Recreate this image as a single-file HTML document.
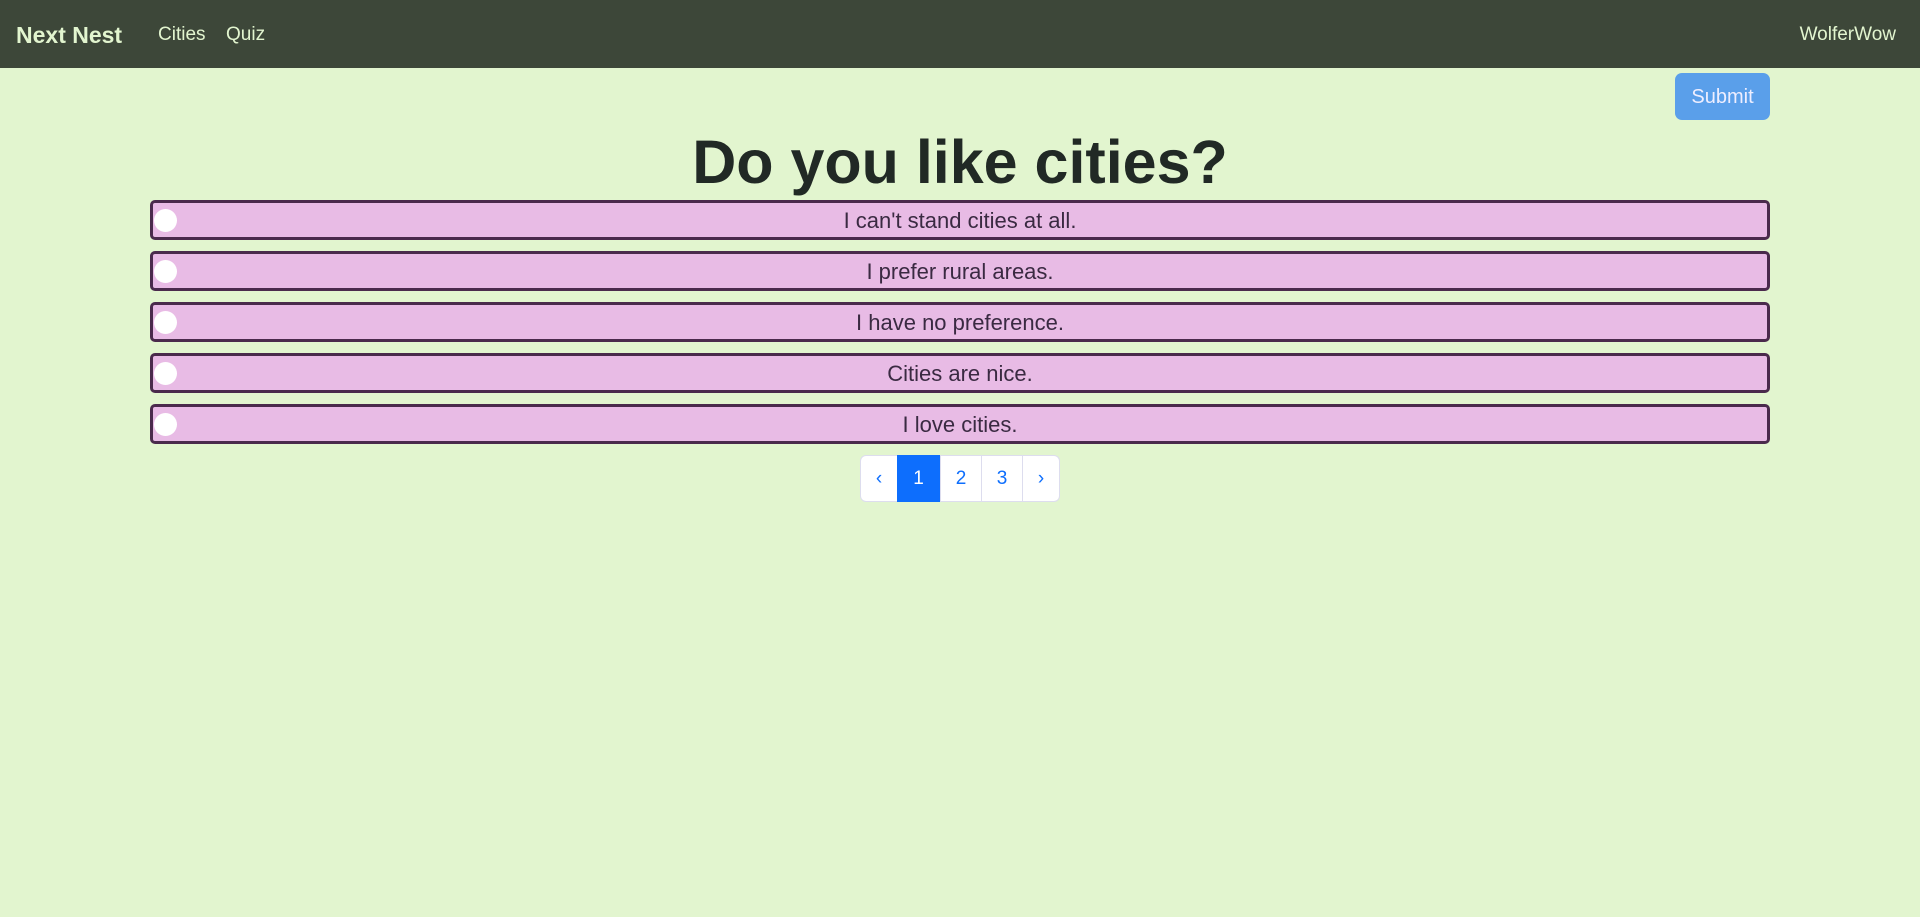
<!DOCTYPE html>
<html><head><meta charset="utf-8"><style>
*{box-sizing:border-box;margin:0;padding:0}
body{width:1920px;height:917px;background:#e2f5cf;font-family:"Liberation Sans",sans-serif;position:relative;overflow:hidden}
.nav{position:absolute;left:0;top:0;width:1920px;height:68px;background:#3d4739;color:#e2f5cf}
.nav span{position:absolute;top:1px;line-height:68px}
.brand{left:16px;font-size:23px;font-weight:bold}
.sub{position:absolute;left:1675px;top:73px;width:95px;height:47px;background:#5a9fea;border-radius:7px;color:#eef;font-size:20px;text-align:center;line-height:49px}
h1{position:absolute;left:0;width:1920px;top:124px;text-align:center;font-size:61px;font-weight:bold;color:#212925;line-height:76px}
.opt{position:absolute;left:150px;width:1620px;height:40px;border:3px solid #4a2a4c;border-radius:5px;background:#e8bbe5;text-align:center;font-size:22px;line-height:35px;color:#3a2a42}
.opt i{position:absolute;left:1px;top:6px;width:23px;height:23px;border-radius:50%;background:#fff}
.pg{position:absolute;top:455px;height:47px;border:1px solid #dde;background:#fff;color:#0d6efd;font-size:19px;text-align:center;line-height:45px}
</style></head><body>
<div class="nav"><span class="brand">Next Nest</span><span style="left:158px;font-size:19px">Cities</span><span style="left:226px;font-size:19px">Quiz</span><span style="left:1793px;font-size:19px;width:103px;text-align:right">WolferWow</span></div>
<div class="sub">Submit</div>
<h1>Do you like cities?</h1>
<div class="opt" style="top:200px"><i></i>I can't stand cities at all.</div>
<div class="opt" style="top:251px"><i></i>I prefer rural areas.</div>
<div class="opt" style="top:302px"><i></i>I have no preference.</div>
<div class="opt" style="top:353px"><i></i>Cities are nice.</div>
<div class="opt" style="top:404px"><i></i>I love cities.</div>
<div class="pg" style="left:860px;width:38px;border-radius:6px 0 0 6px">‹</div>
<div class="pg" style="left:897px;width:43px;background:#0d6efd;color:#fff;border-color:#0d6efd">1</div>
<div class="pg" style="left:940px;width:42px">2</div>
<div class="pg" style="left:981px;width:42px">3</div>
<div class="pg" style="left:1022px;width:38px;border-radius:0 6px 6px 0">›</div>
</body></html>
